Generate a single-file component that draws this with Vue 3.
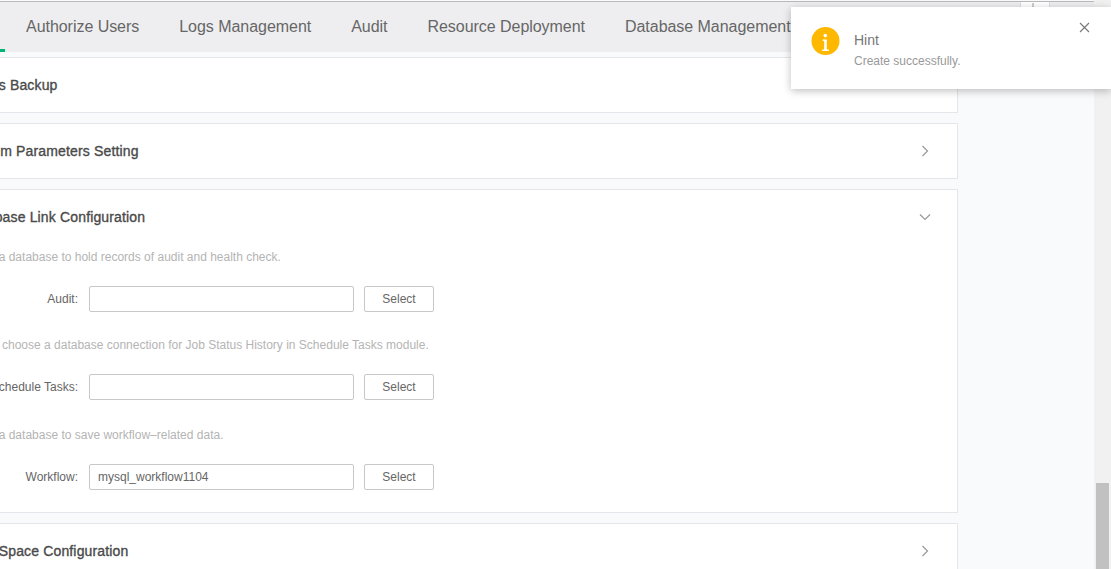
<template>
  <div class="page">
    <div class="main">
      <div class="tabs">
        <div class="tab-active-mark"></div>
        <div v-for="t in tabs" :key="t" class="tab">{{ t }}</div>
        <div class="tab-more"><span class="tab-more-dot"></span></div>
      </div>

      <div class="content">
        <div class="panel first">
          <div class="panel-head">
            <span class="panel-title">Tables Backup</span>
          </div>
        </div>

        <div class="panel">
          <div class="panel-head">
            <span class="panel-title">System Parameters Setting</span>
            <svg class="arrow" width="12" height="12" viewBox="0 0 12 12"><path d="M3.5 1 L8.5 6 L3.5 11" /></svg>
          </div>
        </div>

        <div class="panel">
          <div class="panel-head">
            <span class="panel-title">Database Link Configuration</span>
            <svg class="arrow" width="12" height="12" viewBox="0 0 12 12"><path d="M1 3.5 L6 8.5 L11 3.5" /></svg>
          </div>
          <div class="panel-body">
            <div v-for="row in links" :key="row.label" class="link-block">
              <p class="desc">{{ row.desc }}</p>
              <div class="form-row">
                <label class="form-label">{{ row.label }}:</label>
                <input class="form-input" :value="row.value" />
                <button class="select-btn">Select</button>
              </div>
            </div>
          </div>
        </div>

        <div class="panel">
          <div class="panel-head">
            <span class="panel-title">Data Space Configuration</span>
            <svg class="arrow" width="12" height="12" viewBox="0 0 12 12"><path d="M3.5 1 L8.5 6 L3.5 11" /></svg>
          </div>
        </div>
      </div>
    </div>

    <div class="scrollbar"><div class="thumb"></div></div>

    <div class="notice">
      <svg class="notice-icon" width="29" height="29" viewBox="0 0 29 29">
        <circle cx="14.5" cy="14" r="14" fill="#ffb800" />
        <circle cx="14.3" cy="8.6" r="1.8" fill="#fff" />
        <path d="M11.6 12.4 H15.8 V22.4 H17.8 V24 H11.2 V22.4 H13.2 V14 H11.6 Z" fill="#fff" />
      </svg>
      <div class="notice-text">
        <div class="notice-title">Hint</div>
        <div class="notice-msg">Create successfully.</div>
      </div>
      <svg class="notice-close" width="11" height="11" viewBox="0 0 11 11"><path d="M1 1 L10 10 M10 1 L1 10" /></svg>
    </div>
  </div>
</template>

<script setup>
const tabs = ['Authorize Users', 'Logs Management', 'Audit', 'Resource Deployment', 'Database Management']

const links = [
  { label: 'Audit', desc: 'Select a database to hold records of audit and health check.', value: '' },
  { label: 'Schedule Tasks', desc: 'Please choose a database connection for Job Status History in Schedule Tasks module.', value: '' },
  { label: 'Workflow', desc: 'Select a database to save workflow–related data.', value: 'mysql_workflow1104' }
]
</script>

<style>
html, body {
  margin: 0;
  overflow: hidden;
}
</style>

<style scoped>
.page {
  position: relative;
  display: flex;
  width: 1111px;
  height: 569px;
  overflow: hidden;
  background: #f9fafc;
  font-family: "Liberation Sans", Arial, sans-serif;
}

.main {
  flex: 1;
  min-width: 0;
  border-top: 1px solid #b9b9b9;
  margin-top: 1px;
}

.tabs {
  position: relative;
  display: flex;
  height: 50px;
  padding-left: 26px;
  gap: 40px;
  background: #eeeef0;
}

.tab {
  line-height: 49px;
  font-size: 16px;
  letter-spacing: -0.04px;
  color: #666;
  white-space: nowrap;
}

.tab-active-mark {
  position: absolute;
  left: 0;
  bottom: 0;
  width: 5px;
  height: 3px;
  background: #00b473;
}

.tab-more {
  position: absolute;
  left: 1020px;
  top: 0;
  width: 30px;
  height: 50px;
  box-sizing: border-box;
  background: #fff;
  border-left: 1px solid #ddd;
  border-right: 1px solid #ddd;
}

.tab-more-dot {
  display: block;
  width: 2px;
  height: 4px;
  margin: 1px 0 0 11px;
  background: #ccc;
}

.content {
  margin-left: -100px;
  width: 1058px;
  padding-top: 5px;
}

.panel {
  margin-bottom: 10px;
  background: #fff;
  border: 1px solid #e4e6eb;
}

.panel-head {
  display: flex;
  align-items: center;
  justify-content: space-between;
  height: 54px;
  padding: 0 26px 0 63.5px;
}

.panel-title {
  font-size: 14px;
  letter-spacing: 0.15px;
  color: #4a4a4a;
  -webkit-text-stroke: 0.35px #4a4a4a;
}

.arrow path {
  fill: none;
  stroke: #999;
  stroke-width: 1.2;
}

.panel-body {
  padding: 6px 0 22px 61px;
}

.link-block {
  margin-bottom: 26px;
}

.link-block:nth-child(2) {
  margin-bottom: 28px;
}

.link-block:last-child {
  margin-bottom: 0;
}

.desc {
  margin: 0 0 22px;
  line-height: 14px;
  font-size: 12px;
  color: #b4b4b4;
}

.form-row {
  display: flex;
  align-items: center;
  margin-left: -61px;
}

.form-label {
  width: 188px;
  padding-right: 11px;
  box-sizing: border-box;
  text-align: right;
  font-size: 12px;
  color: #666;
}

.form-input {
  width: 265px;
  height: 26px;
  box-sizing: border-box;
  padding: 0 8px;
  border: 1px solid #c8c8c8;
  border-radius: 2px;
  outline: none;
  font-family: inherit;
  font-size: 12px;
  color: #666;
}

.select-btn {
  width: 70px;
  height: 26px;
  margin-left: 10px;
  background: #fff;
  border: 1px solid #c8c8c8;
  border-radius: 2px;
  font-family: inherit;
  font-size: 12px;
  color: #666;
}

.scrollbar {
  width: 17px;
  flex: none;
  background: #f1f1f1;
}

.thumb {
  width: 13px;
  height: 86px;
  margin: 483px 0 0 2px;
  background: #c1c1c1;
}

.notice {
  position: absolute;
  top: 7px;
  left: 791px;
  display: flex;
  width: 320px;
  height: 82px;
  box-sizing: border-box;
  padding: 20px 0 0 20px;
  background: #fff;
  box-shadow: 0 2px 8px rgba(0, 0, 0, 0.25);
}

.notice-text {
  margin-left: 14px;
  padding-top: 5px;
}

.notice-title {
  line-height: 16px;
  font-size: 14px;
  color: #777;
}

.notice-msg {
  margin-top: 6px;
  line-height: 14px;
  font-size: 12px;
  color: #999;
}

.notice-close {
  position: absolute;
  top: 15px;
  right: 21px;
}

.notice-close path {
  fill: none;
  stroke: #777;
  stroke-width: 1.1;
}
</style>
